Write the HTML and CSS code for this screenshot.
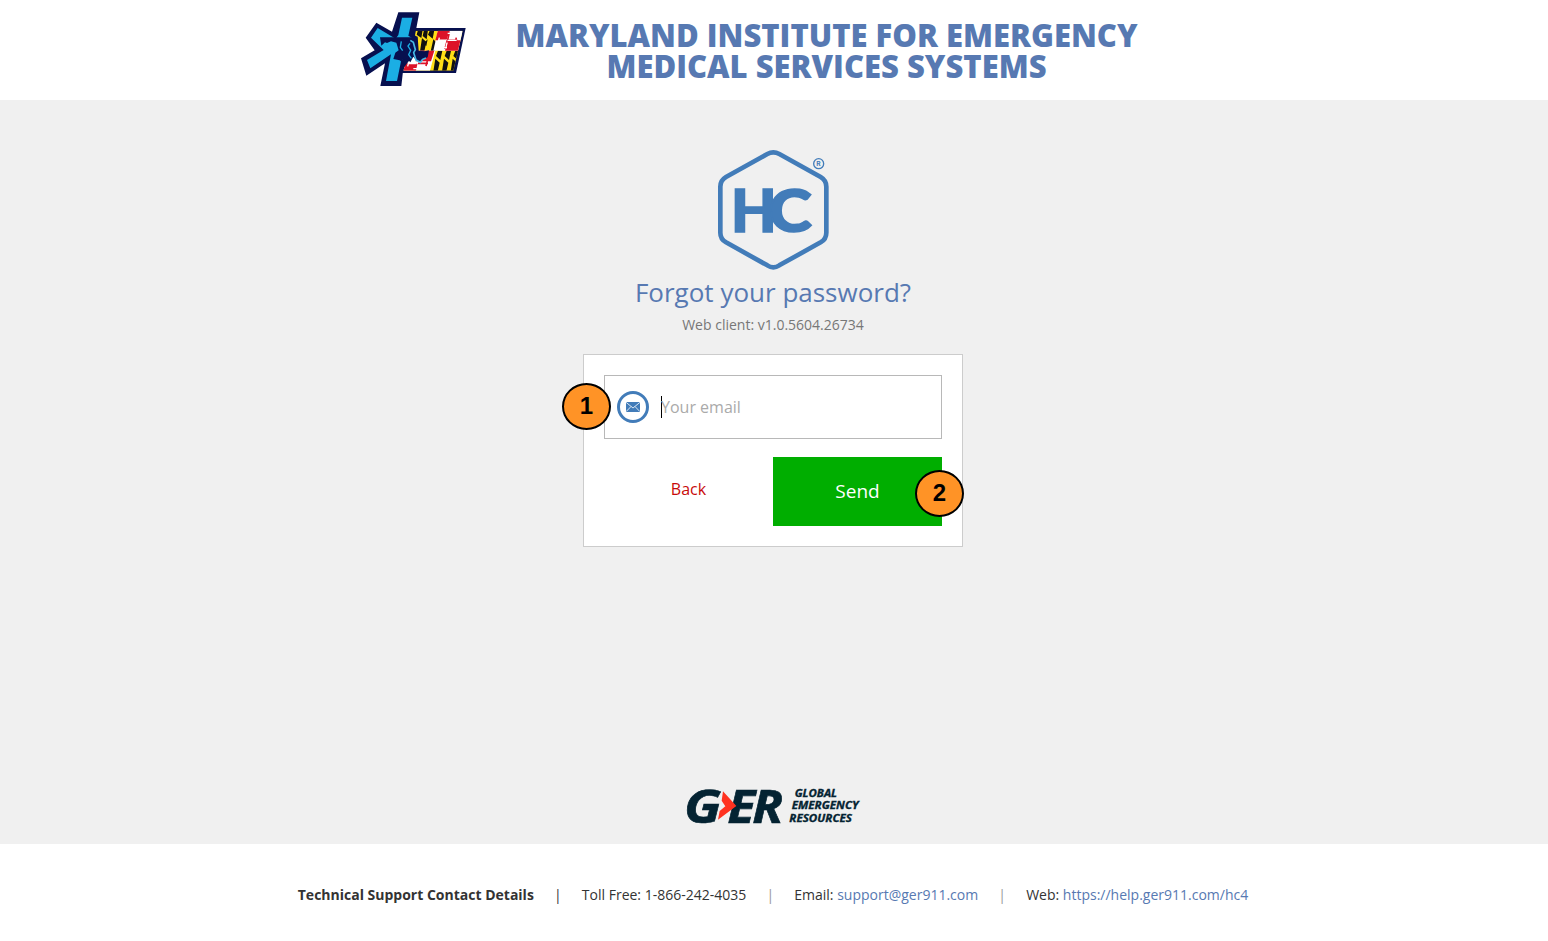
FILE: index.html
```html
<!DOCTYPE html>
<html lang="en">
<head>
<meta charset="utf-8">
<title>Forgot your password?</title>
<link rel="stylesheet" href="styles.css">
</head>
<body>
<header class="header">
  <svg class="agency-logo" viewBox="0 0 390 300" aria-hidden="true">
    <defs>
      <clipPath id="flag"><path d="M196 92H338L310 212H160Z"/></clipPath>
    </defs>
    <path d="M190 84H347L318 219H150Z" fill="#07104f"/>
    <g clip-path="url(#flag)">
      <path d="M150 85H350V215H150Z" fill="#ffde16"/>
      <path d="M204 90h14l-4 24-14-10zM216 114l13 12-6 28h-13zM234 90h-12l-4 18 12 10zM240 90h13l-5 26-14-12zM250 118l10 10-6 26h-12zM233 118l-4 20-8-8z" fill="#111"/>
      <path d="M264 152h13l-6 28-13-12zM256 176l13 12-6 26h-13zM290 152h13l-6 28-13-12zM282 176l13 12-6 26h-13zM316 152h13l-6 28-13-12zM308 176l13 12-6 26h-13z" fill="#111"/>
      <path d="M264 90H342L326 152H250Z" fill="#fff"/>
      <path d="M264 90H300L292 121H256ZM293 121H336L328 152H285Z" fill="#dd1228"/>
      <path d="M267 121H292L300 97M285 146L292 121" fill="none" stroke="#fff" stroke-width="5"/>
      <path d="M294 121H322M292 121L285 147M298 97L293 120M319 113l-4 16" fill="none" stroke="#dd1228" stroke-width="5"/>
      <path d="M293 121H320M291 128L287 146M268 113l-4 16M293 100h10M281 143h10" fill="none" stroke="#fff" stroke-width="4"/>
      <path d="M164 152H256L239 216H155Z" fill="#fff"/>
      <path d="M204 152H253L243 184H197ZM164 190H200L193 216H155Z" fill="#dd1228"/>
      <path d="M204 190H234M232 182l-4 16M200 191L195 213" fill="none" stroke="#dd1228" stroke-width="5"/>
      <path d="M175 191H200M177 183l-4 16M190 206h12" fill="none" stroke="#fff" stroke-width="4"/>
    </g>
    <path d="M145 37H208L195 106L202 113V150L160 205L154 258H91L105 190L49 227L33 175L74 151L47 113L79 68L126 95Z" fill="#07104f"/>
    <path d="M156 53H187L175 107L190 116V142L153 184L141 243H108L123 163L61 205L51 180L101 150L63 113L83 84L137 116L145 105Z" fill="#1baee4"/>
    <path d="M90 112H190L194 107L203 110L206 152L224 154L237 151L233 172L215 179L210 186L198 180L190 170L181 187L171 176L158 179L163 193L149 181L130 177L136 158L146 151L139 128L123 124L111 129L105 127L94 137Z" fill="#07104f"/>
    <path d="M181 121L190 127L196 149L191 158L198 180L211 187L218 178L228 174" fill="none" stroke="#45b9e5" stroke-width="5"/>
    <path d="M180 130L174 138L182 151L176 164L184 175M154 124l-3 18 7 10" fill="none" stroke="#1baee4" stroke-width="4"/>
  </svg>
  <h1 class="title">MARYLAND INSTITUTE FOR EMERGENCY<br>MEDICAL SERVICES SYSTEMS</h1>
</header>
<main class="main">
  <svg class="hc-logo" viewBox="0 0 450 420" role="img" aria-label="HC">
    <path d="M202 42Q220 32 238 42L362 111Q379 121 379 140V278Q379 297 362 307L238 376Q220 388 202 376L78 307Q61 297 61 278V140Q61 121 78 111Z" fill="none" stroke="#427cb9" stroke-width="14"/>
    <text class="hc-text" transform="translate(93 275)" textLength="137" lengthAdjust="spacingAndGlyphs">H</text>
    <text class="hc-text" transform="translate(206 275)" textLength="129" lengthAdjust="spacingAndGlyphs">C</text>
    <circle cx="356" cy="71" r="15" fill="none" stroke="#427cb9" stroke-width="4"/>
    <text class="reg-text" x="349" y="78">R</text>
  </svg>
  <h2 class="heading">Forgot your password?</h2>
  <p class="version">Web client: v1.0.5604.26734</p>
  <form class="card">
    <span class="marker marker-one">1</span>
    <label class="field">
      <svg class="mail-icon" viewBox="0 0 32 32" aria-hidden="true">
        <circle cx="16" cy="16" r="14.5" fill="#fff" stroke="#427cb9" stroke-width="3"/>
        <path d="M9 11H23V21H9Z" fill="#427cb9"/>
        <path d="M9 11.3L16 17L23 11.3M9 20.7L14 15.5M23 20.7L18 15.5" fill="none" stroke="#fff" stroke-width=".8"/>
      </svg>
      <span class="caret"></span>
      <span class="placeholder">Your email</span>
    </label>
    <div class="actions">
      <a class="back">Back</a>
      <div class="send">Send</div>
    </div>
    <span class="marker marker-two">2</span>
  </form>
  <svg class="ger-logo" viewBox="0 0 600 216" role="img" aria-label="Global Emergency Resources">
    <g class="ger-text">
      <text x="24" y="140" textLength="112" lengthAdjust="spacingAndGlyphs">G</text>
      <text x="154" y="140" textLength="84" lengthAdjust="spacingAndGlyphs">E</text>
      <text x="229" y="140" textLength="92" lengthAdjust="spacingAndGlyphs">R</text>
    </g>
    <path d="M141 46L181 90L126 131L131 105L148 91L137 74Z" fill="#ff3220"/>
    <g class="ger-small">
      <text x="356" y="62" textLength="127" lengthAdjust="spacingAndGlyphs">GLOBAL</text>
      <text x="347" y="100" textLength="201" lengthAdjust="spacingAndGlyphs">EMERGENCY</text>
      <text x="340" y="139" textLength="188" lengthAdjust="spacingAndGlyphs">RESOURCES</text>
    </g>
  </svg>
</main>
<footer class="footer">
  <strong>Technical Support Contact Details</strong>
  <span class="bar bar-dark">|</span>
  <span>Toll Free: 1-866-242-4035</span>
  <span class="bar">|</span>
  <span>Email: <a class="link">support@ger911.com</a></span>
  <span class="bar">|</span>
  <span>Web: <a class="link">https://help.ger911.com/hc4</a></span>
</footer>
</body>
</html>
```
FILE: styles.css
```css
* { box-sizing: border-box; }
body { margin: 0; height: 941px; display: flex; flex-direction: column; font-family: "Open Sans", "Noto Sans", sans-serif; background: #fff; color: #333; overflow: hidden; }
.header { height: 100px; display: flex; padding-left: 350px; }
.agency-logo { width: 130px; height: 100px; }
.title { margin: 0 0 0 26px; padding-top: 20px; width: 641px; text-align: center; white-space: nowrap; font-size: 31px; line-height: 31px; font-weight: 800; color: #5779b2; }
.main { height: 744px; background: #f0f0f0; display: flex; flex-direction: column; align-items: center; padding: 40px 2px 0 0; }
.hc-logo { width: 150px; height: 140px; margin-left: 4px; flex: none; }
.hc-text { font: 900 178px Lato, sans-serif; fill: #427cb9; stroke: #427cb9; stroke-width: 5px; }
.reg-text { font: 700 20px Inter, sans-serif; fill: #427cb9; }
.heading { margin: -6px 0 0; font-size: 26px; line-height: 36px; font-weight: 400; color: #5779b2; }
.version { margin: 5px 0 0; font-size: 14px; line-height: 20px; color: #777; }
.card { position: relative; width: 380px; height: 193px; margin: 19px 0 0; padding: 20px; background: #fff; border: 1px solid #ccc; flex: none; }
.field { display: flex; align-items: center; height: 64px; border: 1px solid #b8b8b8; padding-left: 12px; }
.mail-icon { width: 32px; height: 32px; }
.caret { width: 1px; height: 22px; margin: 0 -1px 0 12px; background: #000; }
.placeholder { font-size: 16px; line-height: 22px; color: #aaa; }
.actions { display: grid; grid-template-columns: 1fr 1fr; margin-top: 18px; height: 69px; }
.back { color: #c80a0a; font-size: 16px; line-height: 64px; text-align: center; }
.send { background: #00ae00; color: #fff; font-size: 19px; line-height: 68px; text-align: center; }
.marker { position: absolute; width: 49px; height: 47px; border: 2px solid #000; border-radius: 50%; background: #ff9326; color: #000; font: bold 24px/41px "Liberation Sans", sans-serif; text-align: center; }
.marker-one { left: -22px; top: 28px; }
.marker-two { left: 331px; top: 115px; }
.ger-logo { width: 200px; height: 72px; margin: 229px 0 0 6px; flex: none; overflow: visible; }
.ger-text { font: italic 700 141px "Open Sans", sans-serif; fill: #042332; stroke: #042332; stroke-width: 2px; }
.ger-small { font: italic 700 32px "Open Sans", sans-serif; fill: #042332; stroke: #042332; stroke-width: 1px; }
.footer { display: flex; justify-content: center; padding: 41px 2px 0 0; font-size: 14px; line-height: 20px; white-space: nowrap; }
.bar { width: 48px; text-align: center; color: #999; opacity: .99; }
.bar-dark { color: #333; }
.link { color: #5779b2; }
```
